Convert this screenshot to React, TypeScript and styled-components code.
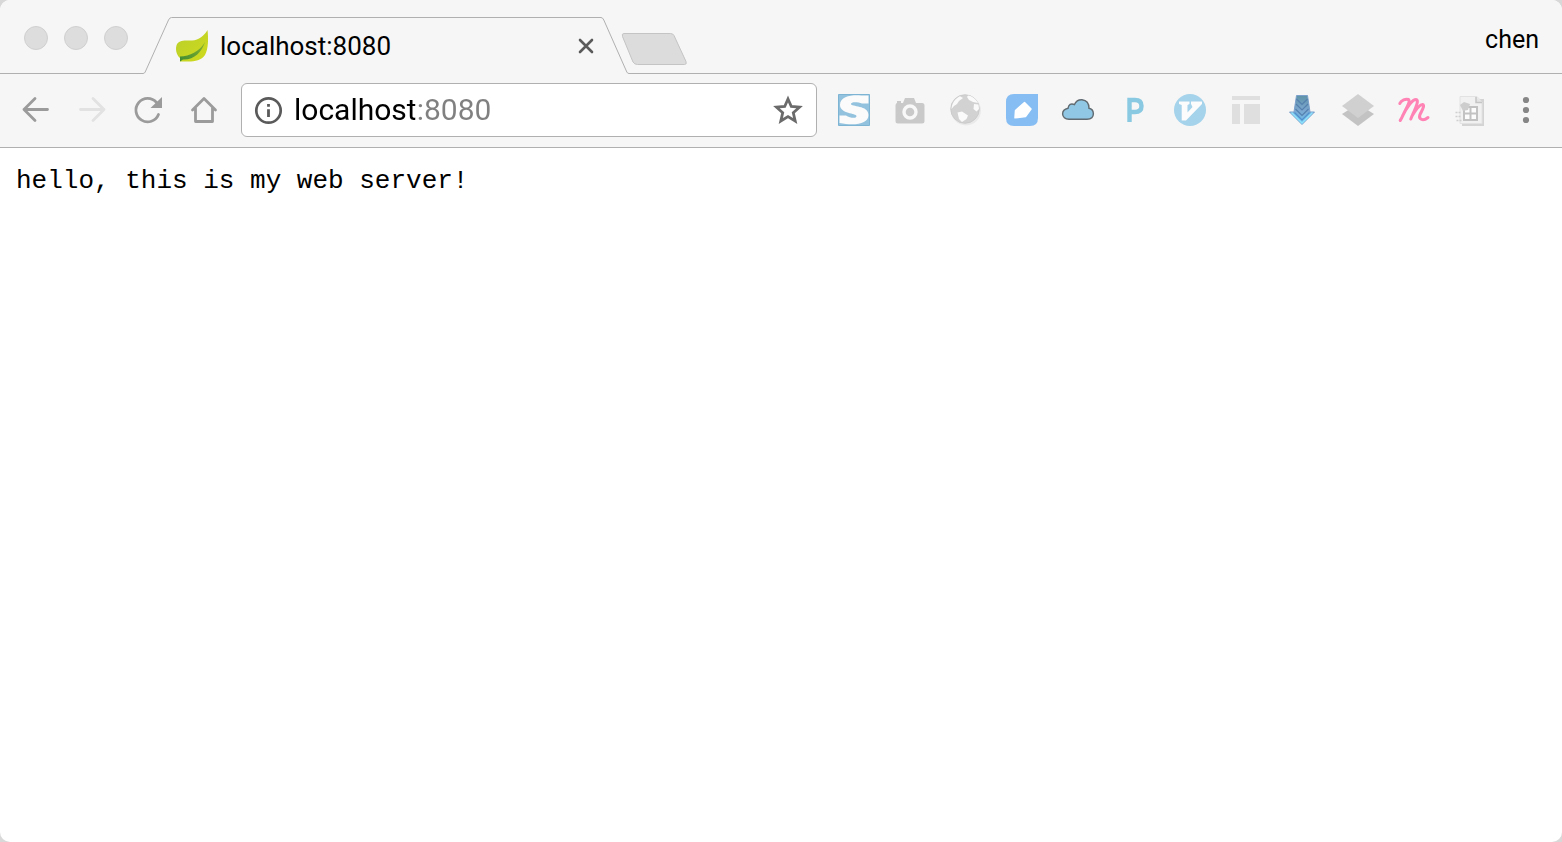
import React from "react";
import styled, { createGlobalStyle } from "styled-components";

const GlobalStyle = createGlobalStyle`
  *, *::before, *::after { box-sizing: border-box; }
  html, body { margin: 0; background: #d8d8d8; }
  button, input { font: inherit; color: inherit; }
`;

const line = "#b0b0b0";
const chrome = "#f6f6f6";

const Window = styled.div`
  display: flex;
  flex-direction: column;
  min-height: 100vh;
  overflow: hidden;
  border-radius: 10px;
  background: #fff;
  font-family: Roboto, "Noto Sans", sans-serif;
  color: #000;
`;

const TabStrip = styled.header`
  display: flex;
  align-items: flex-end;
  height: 74px;
  background: ${chrome};
`;

const WindowControls = styled.div`
  display: flex;
  flex: none;
  gap: 16px;
  align-self: stretch;
  align-items: center;
  padding: 2px 15px 0 24px;
  border-bottom: 1px solid ${line};
`;

const Light = styled.button`
  width: 24px;
  height: 24px;
  padding: 0;
  border: 1px solid #d0d0d0;
  border-radius: 50%;
  background: #dddddd;
`;

const TabEdge = styled.svg`
  display: block;
  flex: none;
  width: 30px;
  height: 57px;
`;

const Tab = styled.div`
  display: flex;
  flex: 0 1 427px;
  min-width: 0;
  height: 57px;
  align-items: center;
  gap: 12px;
  padding-left: 3px;
  border-top: 1px solid ${line};
`;

const TabTitle = styled.a`
  flex: 1;
  min-width: 0;
  overflow: hidden;
  font-size: 26px;
  line-height: 32px;
  white-space: nowrap;
  color: inherit;
  text-decoration: none;
`;

const StripRest = styled.div`
  display: flex;
  flex: 1;
  align-self: stretch;
  align-items: center;
  justify-content: space-between;
  padding: 7px 23px 0 0;
  border-bottom: 1px solid ${line};
`;

const Profile = styled.button`
  padding: 0;
  border: 0;
  background: none;
  font-size: 25px;
  line-height: 32px;
`;

const Icon = styled.svg<{ $size?: number }>`
  display: block;
  width: ${(p) => p.$size ?? 32}px;
  height: ${(p) => p.$size ?? 32}px;
  overflow: visible;
`;

const IconButton = styled.button`
  flex: none;
  padding: 0;
  border: 0;
  background: none;
`;

const NewTabShape = styled.svg`
  display: block;
  width: 68px;
  height: 34px;
`;

const NewTab = styled.button`
  margin-left: -10px;
  padding: 18px 0 0;
  border: 0;
  background: none;
`;

const Toolbar = styled.nav`
  display: flex;
  align-items: center;
  gap: 21px;
  height: 74px;
  padding: 0 20px 1px;
  border-bottom: 1px solid ${line};
  background: ${chrome};
`;

const ButtonGroup = styled.div`
  display: flex;
  flex: none;
  gap: 24px;
`;

const AddressBar = styled.form`
  display: flex;
  flex: 1;
  min-width: 0;
  height: 54px;
  align-items: center;
  gap: 10px;
  padding: 0 12px 0 10px;
  border: 1px solid ${line};
  border-radius: 6px;
  background: #fff;
`;

const AddressInput = styled.input`
  flex: 1;
  min-width: 0;
  height: 40px;
  padding: 0;
  border: 0;
  outline: 0;
  font-size: 30px;
  line-height: 40px;
  background: linear-gradient(to right, #000 121px, #808080 121px);
  background-clip: text;
  -webkit-background-clip: text;
  color: transparent;
  caret-color: #000;
`;

const Page = styled.main`
  flex: 1;
  padding: 17px 16px;
`;

const Response = styled.pre`
  margin: 0;
  font-family: "Courier New", "Liberation Mono", monospace;
  font-size: 26px;
  line-height: 32px;
  white-space: pre-wrap;
`;

const LeafIcon = () => (
  <Icon viewBox="0 0 32 32" aria-hidden="true">
    <defs>
      <linearGradient id="leaf" x1="0" y1="0" x2="1" y2="1">
        <stop offset="0" stopColor="#b9cf2c" />
        <stop offset="1" stopColor="#cfda1c" />
      </linearGradient>
      <linearGradient id="vein" x1="0" y1="1" x2="1" y2="0">
        <stop offset="0" stopColor="#3d8a35" />
        <stop offset="1" stopColor="#8db52a" />
      </linearGradient>
    </defs>
    <path d="M31.500 0C32.500 8 32.500 19 29 25C25 31 17 32 9 31.500L4 31.500L4 28C0 25-1 18 1 14C4 10 9 10.500 16 10.500C23 10 28 6 31.500 0Z" fill="url(#leaf)" />
    <path d="M4 26.500C14 26 23 22 29 12C26 22 18 30 7 29.500L4 31.500Z" fill="url(#vein)" />
  </Icon>
);

const CloseIcon = () => (
  <Icon viewBox="0 0 28 28" $size={28} aria-hidden="true">
    <path d="M8 8L20 20M20 8L8 20" stroke="#5a5a5a" strokeWidth="2.600" strokeLinecap="round" />
  </Icon>
);

const ArrowIcon = ({ color, flip }: { color: string; flip?: boolean }) => (
  <Icon viewBox="0 0 32 32" aria-hidden="true">
    <path
      d={flip ? "M4.500 15.500H28M17 4.500L28 15.500L17 26.500" : "M27.500 15.500H4M15 4.500L4 15.500L15 26.500"}
      fill="none" stroke={color} strokeWidth="2.800" strokeLinecap="round" strokeLinejoin="round"
    />
  </Icon>
);

const ReloadIcon = () => (
  <Icon viewBox="0 0 32 32" aria-hidden="true">
    <path d="M26.500 20.500A11.700 11.700 0 1 1 24.500 8.500" fill="none" stroke="#9b9b9b" strokeWidth="2.800" strokeLinecap="round" />
    <path d="M30 3V14H18.500Z" fill="#9b9b9b" />
  </Icon>
);

const HomeIcon = () => (
  <Icon viewBox="0 0 32 32" aria-hidden="true">
    <path d="M4.500 16L16 4.500L27.500 16M7.500 14V27.500H24.500V14" fill="none" stroke="#9b9b9b" strokeWidth="2.800" strokeLinecap="round" strokeLinejoin="round" />
  </Icon>
);

const InfoIcon = () => (
  <Icon viewBox="0 0 32 32" aria-hidden="true">
    <circle cx="16.500" cy="16.500" r="12.200" fill="none" stroke="#5a5a5a" strokeWidth="2.700" />
    <path d="M16.500 15.200V23M16.500 10V12.800" stroke="#5a5a5a" strokeWidth="2.800" />
  </Icon>
);

const StarIcon = () => (
  <Icon viewBox="0 0 32 32" aria-hidden="true">
    <path d="M16 5L19.300 12.500L27.500 13.200L21.300 18.700L23.200 27L16 22.600L8.800 27L10.700 18.700L4.500 13.200L12.700 12.500Z" fill="none" stroke="#6b6b6b" strokeWidth="2.800" />
  </Icon>
);

const MenuIcon = () => (
  <Icon viewBox="0 0 32 32" aria-hidden="true">
    {[6, 16, 26].map((y) => <circle key={y} cx="16" cy={y} r="3.100" fill="#868686" />)}
  </Icon>
);

const extensions: { name: string; art: React.ReactNode }[] = [
  {
    name: "Stylish",
    art: (
      <>
        <path d="M.5 .5H31.500V31.500H.5Z" fill="#92c2de" stroke="#7db4d4" />
        <path d="M30.500 1.500V9.500H24C20 8 13 7.500 13 10C13 13 30.500 11 30.500 21C30.500 30 17 32 1.500 29V21.500H8C12 24 18.500 25 18.500 22C18.500 19 2 20 2 11C2 2 14 .8 23 1.500Z" fill="#fbfbfb" />
      </>
    ),
  },
  {
    name: "Screenshot",
    art: (
      <>
        <path d="M3 9V7H7V9H9L11 4H20L22 9H28Q30.500 9 30.500 11.500V27Q30.500 29.500 28 29.500H4Q1.500 29.500 1.500 27V11.500Q1.500 9 3 9Z" fill="#c9c9c9" />
        <circle cx="16" cy="18" r="6" fill="none" stroke="#f8f8f8" strokeWidth="3.400" />
      </>
    ),
  },
  {
    name: "Globe",
    art: (
      <>
        <circle cx="16" cy="16.500" r="15" fill="#e9e9e9" />
        <circle cx="15" cy="15" r="14.300" fill="#d2d2d2" stroke="#c8c8c8" strokeWidth=".8" />
        <path d="M1.500 15C2 9 5 4.500 10 2.200L13 4L9 7L7 10L4 12ZM18 1.500C22 2 26 5 28 9L23 8L19 6L17 3ZM24 10L28.500 10.500L29 15L26.500 17.500L23.500 15ZM7.500 18.500L12 17.500L18 21.500L16.500 25L12 28L9 25Z" fill="#fafafa" />
      </>
    ),
  },
  {
    name: "Notes",
    art: (
      <>
        <path d="M8 0H32V24Q32 32 24 32H8Q0 32 0 24V8Q0 0 8 0Z" fill="#86bdf3" />
        <path d="M18.500 8.500L25 15L19.500 22.500L9 23.800L9.500 16.500Z" fill="#fff" stroke="#fff" strokeWidth="1.500" strokeLinejoin="round" />
      </>
    ),
  },
  {
    name: "Cloud",
    art: <path d="M7 25.300H25Q31.400 25 31.400 19.500Q31 15 27 14.300Q27 6.500 20 5.700Q14.500 5.500 12.500 10.500Q7 8.500 6 14.300Q.6 15.500 .6 20Q1 25 7 25.300Z" fill="#8fc7e4" stroke="#606a70" strokeWidth="1.400" />,
  },
  {
    name: "Pocket",
    art: <path d="M11.500 28V6H17Q23.500 6 23.500 12Q23.500 18 17 18H12" fill="none" stroke="#89c9e2" strokeWidth="4.400" />,
  },
  {
    name: "Vimium",
    art: (
      <>
        <circle cx="16" cy="16" r="16" fill="#a5d3eb" />
        <path d="M5 7.500H15.500V10L13.500 11V18.500L18.500 13L17 10V7.500H28V10L12 26.500H7.700V11L5 10Z" fill="#fcfcfc" />
      </>
    ),
  },
  {
    name: "Layout",
    art: <path d="M2 2H30V6H2ZM2 10H10V30H2ZM14 10H30V30H14Z" fill="#dfdfdf" />,
  },
  {
    name: "Downloader",
    art: (
      <>
        <defs>
          <linearGradient id="down" x1="0" y1="0" x2="0" y2="1">
            <stop offset="0" stopColor="#5f93a8" />
            <stop offset=".5" stopColor="#7ba6cf" />
            <stop offset="1" stopColor="#6fc4f0" />
          </linearGradient>
        </defs>
        <path d="M10.500 1.500H21.500L24 18H28.500L16 30.500L3.500 18H8Z" fill="url(#down)" stroke="#7ba0cb" strokeWidth="1" />
        <path d="M10.500 5L16 10.500L21.500 5M10 10L16 16L22 10M9.500 15L16 21.500L22.500 15" fill="none" stroke="#5580ae" strokeWidth="1.200" />
        <path d="M5.500 18.500L16 29L26.500 18.500" fill="none" stroke="#8ce1fc" strokeWidth="1.500" />
        <path d="M8.500 18.500L16 26L23.500 18.500" fill="none" stroke="#4f8fce" strokeWidth="1.200" />
      </>
    ),
  },
  {
    name: "Layers",
    art: (
      <>
        <path d="M16 10L32 20L16 32L0 20Z" fill="#c3c3c3" />
        <path d="M16 0L32 12L16 24L0 12Z" fill="#d0d0d0" />
      </>
    ),
  },
  {
    name: "Momentum",
    art: <path d="M1.800 9.500C3 6 8 4.500 10.500 5.500C12.500 7 9 13 6.500 18C5 21 4 24 2.200 26.500M4.500 22C8 15 14 5.500 18 5.500C22 6 16.500 16 12.800 25M14 22C17 17 21.500 10.500 24.500 10.500C27.500 11 23.500 17 21.800 21C20.500 25.500 25 27.500 30 23.500" fill="none" stroke="#ff83b4" strokeWidth="3" strokeLinecap="round" strokeLinejoin="round" />,
  },
  {
    name: "Document",
    art: (
      <>
        <path d="M8 5H30V32H8Z" fill="#d4d4d4" />
        <path d="M6 2.500H23L28 8V29.500H6Z" fill="#f1f1f1" stroke="#e2e2e2" />
        <path d="M22 3V8.500H28" fill="#e4e4e4" stroke="#c5c5c5" strokeWidth="1.500" />
        <path d="M10 13H23V26H10ZM16.500 13V26M10 19.500H23" fill="#fcfcfc" stroke="#c2c2c2" strokeWidth="2" />
        <path d="M6 11L10 8L16 10L14 16L9 17Z" fill="#cdcdcd" />
        <path d="M1.500 18.500H7M1.500 22.500H7M2.500 26.500H8" stroke="#cfcfcf" strokeWidth="1.500" strokeDasharray="2 1" />
      </>
    ),
  },
];

export default function App() {
  return (
    <Window>
      <GlobalStyle />
      <TabStrip>
        <WindowControls>
          <Light aria-label="Close window" />
          <Light aria-label="Minimize window" />
          <Light aria-label="Zoom window" />
        </WindowControls>
        <TabEdge viewBox="0 0 30 57" aria-hidden="true">
          <path d="M0 56.500Q1.500 56.500 2.200 55L25.500 3Q26.700 .5 28.500 .5H30" fill="none" stroke={line} />
        </TabEdge>
        <Tab>
          <LeafIcon />
          <TabTitle href="#">localhost:8080</TabTitle>
          <IconButton aria-label="Close tab"><CloseIcon /></IconButton>
        </Tab>
        <TabEdge viewBox="0 0 30 57" aria-hidden="true">
          <path d="M30 56.500H29Q27.500 56.500 26.800 55L3.800 3Q2.700 .5 1 .5H0" fill="none" stroke={line} />
        </TabEdge>
        <StripRest>
          <NewTab aria-label="New tab">
            <NewTabShape viewBox="0 0 68 34" aria-hidden="true">
              <path d="M4 1.500H50.500Q53 1.500 54 3.500L66 29.500Q67 32.500 64.500 32.500H17.500Q14.500 32.500 13 30L2.500 4.500Q1.500 1.500 4 1.500Z" fill="#dcdcdc" stroke="#c4c4c4" />
            </NewTabShape>
          </NewTab>
          <Profile>chen</Profile>
        </StripRest>
      </TabStrip>
      <Toolbar aria-label="Browser toolbar">
        <ButtonGroup>
          <IconButton aria-label="Back"><ArrowIcon color="#9b9b9b" /></IconButton>
          <IconButton aria-label="Forward"><ArrowIcon color="#e2e2e2" flip /></IconButton>
          <IconButton aria-label="Reload"><ReloadIcon /></IconButton>
          <IconButton aria-label="Home"><HomeIcon /></IconButton>
        </ButtonGroup>
        <AddressBar onSubmit={(e) => e.preventDefault()}>
          <IconButton type="button" aria-label="Site information"><InfoIcon /></IconButton>
          <AddressInput aria-label="Address" defaultValue="localhost:8080" spellCheck={false} />
          <IconButton type="button" aria-label="Bookmark this page"><StarIcon /></IconButton>
        </AddressBar>
        <ButtonGroup>
          {extensions.map(({ name, art }) => (
            <IconButton key={name} aria-label={name}>
              <Icon viewBox="0 0 32 32" aria-hidden="true">{art}</Icon>
            </IconButton>
          ))}
          <IconButton aria-label="Menu"><MenuIcon /></IconButton>
        </ButtonGroup>
      </Toolbar>
      <Page>
        <Response>hello, this is my web server!</Response>
      </Page>
    </Window>
  );
}
